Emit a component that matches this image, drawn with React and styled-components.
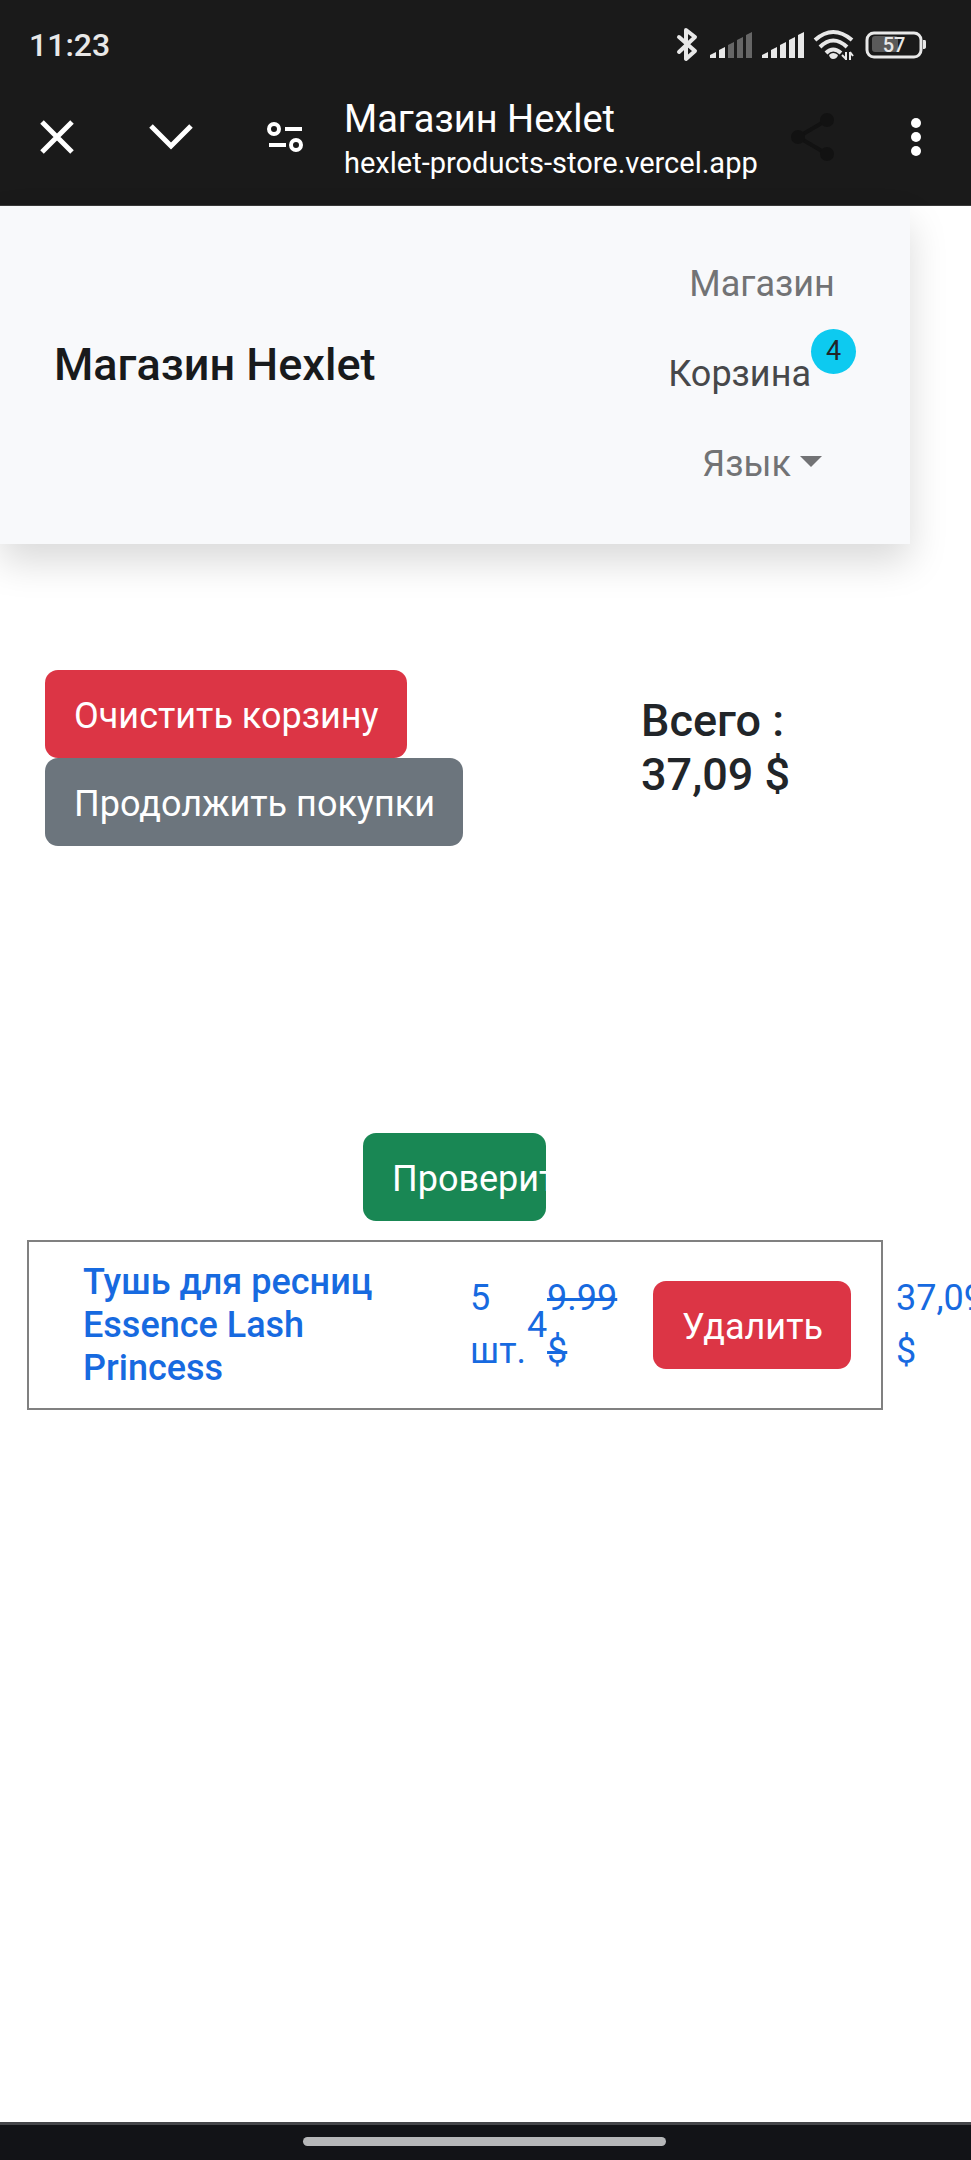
import React from 'react';
import styled, { createGlobalStyle } from 'styled-components';

const GlobalStyle = createGlobalStyle`
  *, *::before, *::after { box-sizing: border-box; }
  body {
    margin: 0;
    background: #fff;
    color: #212529;
    font-family: Roboto, "Noto Sans", sans-serif;
    font-size: 36px;
    line-height: 53px;
  }
  h1, h2, p, ul { margin: 0; padding: 0; }
  button { font: inherit; border: 0; cursor: pointer; }
  a { text-decoration: none; }
`;

const Screen = styled.div`
  display: flex;
  flex-direction: column;
  min-height: 100vh;
  overflow-x: hidden;
`;

const BrowserHeader = styled.header`
  height: 206px;
  background: #1a1a1a;
  color: #fff;
  border-bottom: 1px solid #3a3a3a;
`;

const StatusBar = styled.div`
  display: flex;
  align-items: center;
  justify-content: space-between;
  height: 68px;
  padding: 22px 44px 0 29px;
  color: #e8e8e8;
`;

const Clock = styled.time`
  font-size: 32px;
  line-height: 40px;
  font-weight: 500;
`;

const StatusIcons = styled.svg`
  display: block;
  width: 252px;
  height: 40px;
`;

const Toolbar = styled.div`
  display: flex;
  align-items: center;
  height: 137px;
  padding-right: 4px;
`;

const ToolButton = styled.button`
  display: flex;
  flex: none;
  align-items: center;
  justify-content: center;
  width: ${(p) => (p.$narrow ? 103 : 114)}px;
  height: 100px;
  padding: 0;
  background: none;
  color: ${(p) => (p.$dim ? '#121212' : '#fff')};
`;

const PageInfo = styled.div`
  flex: 1;
  min-width: 0;
  padding: 6px 0 0 2px;
  white-space: nowrap;
`;

const PageTitle = styled.p`
  font-size: 38px;
  line-height: 46px;
`;

const PageUrl = styled.p`
  font-size: 29px;
  line-height: 42px;
`;

const Navbar = styled.nav`
  display: flex;
  align-items: center;
  justify-content: space-between;
  margin-right: 61px;
  height: 338px;
  padding: 0 54px;
  background: #f8f9fb;
  box-shadow: 0 18px 36px rgba(0, 0, 0, 0.15);
`;

const Brand = styled.a`
  padding-bottom: 20px;
  font-size: 45px;
  line-height: 54px;
  font-weight: 500;
  color: #181a1c;
`;

const NavList = styled.ul`
  display: flex;
  flex-direction: column;
  align-items: center;
  padding-bottom: 2px;
  list-style: none;
`;

const NavItem = styled.li`
  display: flex;
  align-items: center;
  height: 90px;
`;

const NavLink = styled.a`
  color: ${(p) => (p.$active ? '#47484a' : '#727375')};
`;

const Badge = styled.span`
  align-self: flex-start;
  width: 45px;
  height: 45px;
  border-radius: 50%;
  background: #0dcaf0;
  color: #212529;
  font-size: 27px;
  line-height: 45px;
  text-align: center;
`;

const LanguageButton = styled.button`
  display: flex;
  align-items: center;
  gap: 9px;
  padding: 0;
  background: none;
  color: #727375;
`;

const Caret = styled.span`
  margin-bottom: 6px;
  border: 11px solid transparent;
  border-top-color: currentColor;
  border-bottom: 0;
`;

const Main = styled.main`
  flex: 1;
`;

const Summary = styled.section`
  display: flex;
  align-items: flex-start;
  margin: 126px 130px 0 45px;
`;

const Actions = styled.div`
  display: flex;
  flex: 1;
  flex-direction: column;
  align-items: flex-start;
`;

const tones = { danger: '#dc3545', neutral: '#6c757d', success: '#198754' };

const ActionButton = styled.button`
  height: 88px;
  padding: 4px 28px 0 29px;
  border-radius: 13px;
  background: ${(p) => tones[p.$tone]};
  color: #fff;
  white-space: nowrap;
`;

const CheckoutButton = styled(ActionButton)`
  width: 183px;
  text-align: left;
  overflow: hidden;
`;

const Total = styled.h2`
  width: 200px;
  padding: 24px 40px 0 0;
  font-size: 45px;
  line-height: 54px;
  font-weight: 500;
`;

const Checkout = styled.div`
  display: flex;
  justify-content: center;
  margin: 287px 62px 19px 0;
`;

const ProductRow = styled.article`
  display: flex;
  align-items: center;
  margin-left: 27px;
  color: #176ae0;
`;

const ProductCard = styled.div`
  display: grid;
  grid-template-columns: minmax(0, 1fr) 57px 20px 106px auto;
  flex: 1;
  align-items: center;
  height: 170px;
  padding: 0 30px 0 54px;
  border: 2px solid #808080;
`;

const ProductLink = styled.a`
  max-width: 300px;
  color: inherit;
  line-height: 43px;
  font-weight: 500;
`;

const OldPrice = styled.s`
  width: 72px;
  text-decoration-thickness: 3px;
`;

const LinePrice = styled.p`
  flex: none;
  width: 88px;
  padding-left: 13px;
`;

const HomeBar = styled.footer`
  display: flex;
  align-items: center;
  justify-content: center;
  height: 38px;
  padding: 0 3px 2px 0;
  border-top: 3px solid #45464a;
  background: #121317;
`;

const HomeHandle = styled.div`
  width: 363px;
  height: 9px;
  border-radius: 5px;
  background: #b6b7b9;
`;

function SignalBars({ x, active }) {
  return [0, 1, 2, 3, 4].map((i) => {
    const left = x + i * 9;
    const top = 22 - i * 5;
    return (
      <path
        key={i}
        d={`M${left} 27V${top + 2}L${left + 6} ${top - 1}V27Z`}
        fill={i < active ? '#e8e8e8' : '#666'}
      />
    );
  });
}

function Indicators() {
  return (
    <StatusIcons viewBox="675 24 252 40" fill="none" role="img" aria-label="Bluetooth, сеть, Wi-Fi, батарея">
      <path d="M679 36 695 50 686 58V29L695 36 679 51" stroke="#e8e8e8" strokeWidth="4" strokeLinejoin="round" strokeLinecap="round" />
      <g transform="translate(0 30)">
        <SignalBars x={710} active={2} />
        <SignalBars x={762} active={5} />
      </g>
      <g stroke="#e8e8e8" strokeWidth="4">
        <path d="M815 39Q833 23 852 39" />
        <path d="M820 46Q833 33 847 46" />
        <path d="M826 52Q833 45 841 52" />
      </g>
      <path d="M829 54Q833 50 838 54Q837 58 833 58Q830 58 829 54Z" fill="#e8e8e8" />
      <path d="M846 51V59M842 54 846 58M850 59V51M850 51 853 55" stroke="#e8e8e8" strokeWidth="2" />
      <rect x="867" y="32" width="54" height="24" rx="7" stroke="#e8e8e8" strokeWidth="3" />
      <rect x="872" y="35" width="26" height="16" rx="3" fill="#5a5a5a" />
      <path d="M923 39H925Q926 39 926 41V46Q926 48 923 48Z" fill="#e8e8e8" />
      <text x="894" y="51" fill="#e8e8e8" fontSize="20" fontWeight="500" textAnchor="middle">57</text>
    </StatusIcons>
  );
}

export default function App() {
  return (
    <Screen>
      <GlobalStyle />
      <BrowserHeader>
        <StatusBar>
          <Clock>11:23</Clock>
          <Indicators />
        </StatusBar>
        <Toolbar>
          <ToolButton aria-label="Закрыть">
            <svg width="34" height="34" fill="none" stroke="currentColor" strokeWidth="5">
              <path d="M2 2 32 32M32 2 2 32" />
            </svg>
          </ToolButton>
          <ToolButton aria-label="Свернуть">
            <svg width="44" height="28" fill="none" stroke="currentColor" strokeWidth="5">
              <path d="M2 3 22 23 42 3" />
            </svg>
          </ToolButton>
          <ToolButton aria-label="Настройки сайта">
            <svg width="36" height="32" fill="none" stroke="currentColor" strokeWidth="4">
              <circle cx="7" cy="8" r="5" />
              <circle cx="29" cy="24" r="5" />
              <path d="M18 8H35M2 24H19" />
            </svg>
          </ToolButton>
          <PageInfo>
            <PageTitle>Магазин Hexlet</PageTitle>
            <PageUrl>hexlet-products-store.vercel.app</PageUrl>
          </PageInfo>
          <ToolButton $narrow $dim aria-label="Поделиться">
            <svg width="44" height="48" fill="currentColor">
              <path d="M36 7 7 24 36 41" fill="none" stroke="currentColor" strokeWidth="4" />
              <circle cx="36" cy="7" r="7" />
              <circle cx="7" cy="24" r="7" />
              <circle cx="36" cy="41" r="7" />
            </svg>
          </ToolButton>
          <ToolButton $narrow aria-label="Меню">
            <svg width="12" height="40" fill="currentColor">
              <circle cx="6" cy="6" r="5" />
              <circle cx="6" cy="20" r="5" />
              <circle cx="6" cy="34" r="5" />
            </svg>
          </ToolButton>
        </Toolbar>
      </BrowserHeader>

      <Main>
        <Navbar>
          <Brand href="#home">Магазин Hexlet</Brand>
          <NavList>
            <NavItem><NavLink href="#shop">Магазин</NavLink></NavItem>
            <NavItem>
              <NavLink href="#cart" $active>Корзина</NavLink>
              <Badge>4</Badge>
            </NavItem>
            <NavItem>
              <LanguageButton>Язык<Caret /></LanguageButton>
            </NavItem>
          </NavList>
        </Navbar>

        <Summary>
          <Actions>
            <ActionButton $tone="danger">Очистить корзину</ActionButton>
            <ActionButton $tone="neutral">Продолжить покупки</ActionButton>
          </Actions>
          <Total>Всего : 37,09 $</Total>
        </Summary>

        <Checkout>
          <CheckoutButton $tone="success">Проверить</CheckoutButton>
        </Checkout>

        <ProductRow>
          <ProductCard>
            <ProductLink href="#product">Тушь для ресниц Essence Lash Princess</ProductLink>
            <span>5 шт.</span>
            <span>4</span>
            <OldPrice>9.99 $</OldPrice>
            <ActionButton $tone="danger">Удалить</ActionButton>
          </ProductCard>
          <LinePrice>37,09 $</LinePrice>
        </ProductRow>
      </Main>

      <HomeBar><HomeHandle /></HomeBar>
    </Screen>
  );
}
